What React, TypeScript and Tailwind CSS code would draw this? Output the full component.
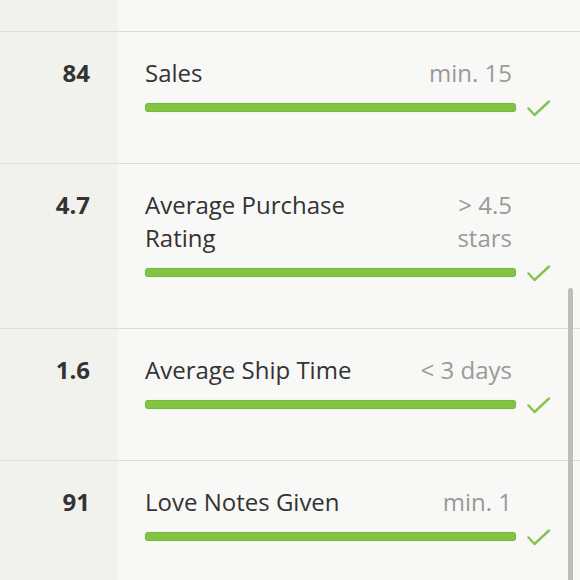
const metrics = [
  { value: "84", label: "Sales", goal: "min. 15" },
  { value: "4.7", label: "Average Purchase Rating", goal: "> 4.5 stars" },
  { value: "1.6", label: "Average Ship Time", goal: "< 3 days" },
  { value: "91", label: "Love Notes Given", goal: "min. 1" },
];

function CheckMark() {
  return (
    <svg width="24" height="18" viewBox="0 0 24 18" className="-mt-[3px] ml-[11px] shrink-0">
      <polyline
        points="1.5,8.5 7.5,15 22,1.5"
        fill="none"
        stroke="#86c44f"
        strokeWidth="2.4"
        strokeLinecap="round"
        strokeLinejoin="round"
      />
    </svg>
  );
}

function MetricRow({ value, label, goal }: { value: string; label: string; goal: string }) {
  return (
    <li className="grid grid-cols-[118px_1fr] border-t border-[#dcdcd8]">
      <div className="pr-[28px] pt-[24px] text-right text-[24px] font-bold leading-[33px] text-[#333]">
        {value}
      </div>
      <div className="pl-[27px] pt-[24px] pb-[51px]">
        <div className="flex w-[371px] justify-between gap-4 text-[24px] font-medium leading-[33px]">
          <span className="max-w-[240px] text-[#333]">{label}</span>
          <span className="max-w-[105px] pr-[4px] text-right text-[#9a9a98]">{goal}</span>
        </div>
        <div className="mt-[14px] flex h-[9px] items-start">
          <div className="h-[9px] w-[371px] rounded-[3px] border border-[#76b843] bg-[#82c341] shadow-[0_0_1px_rgba(0,0,0,0.2)]" />
          <CheckMark />
        </div>
      </div>
    </li>
  );
}

export default function App() {
  return (
    <div
      className="relative h-[580px] w-[580px] overflow-hidden bg-[linear-gradient(to_right,#f1f1ed_118px,#f8f8f6_118px)]"
      style={{ fontFamily: "'Open Sans', sans-serif" }}
    >
      <div className="h-[31px]" />
      <ul>
        {metrics.map((m) => (
          <MetricRow key={m.label} {...m} />
        ))}
      </ul>
      <div className="absolute right-[7px] top-[288px] h-[300px] w-[5px] rounded-full bg-[#bdbdbb]" />
    </div>
  );
}
